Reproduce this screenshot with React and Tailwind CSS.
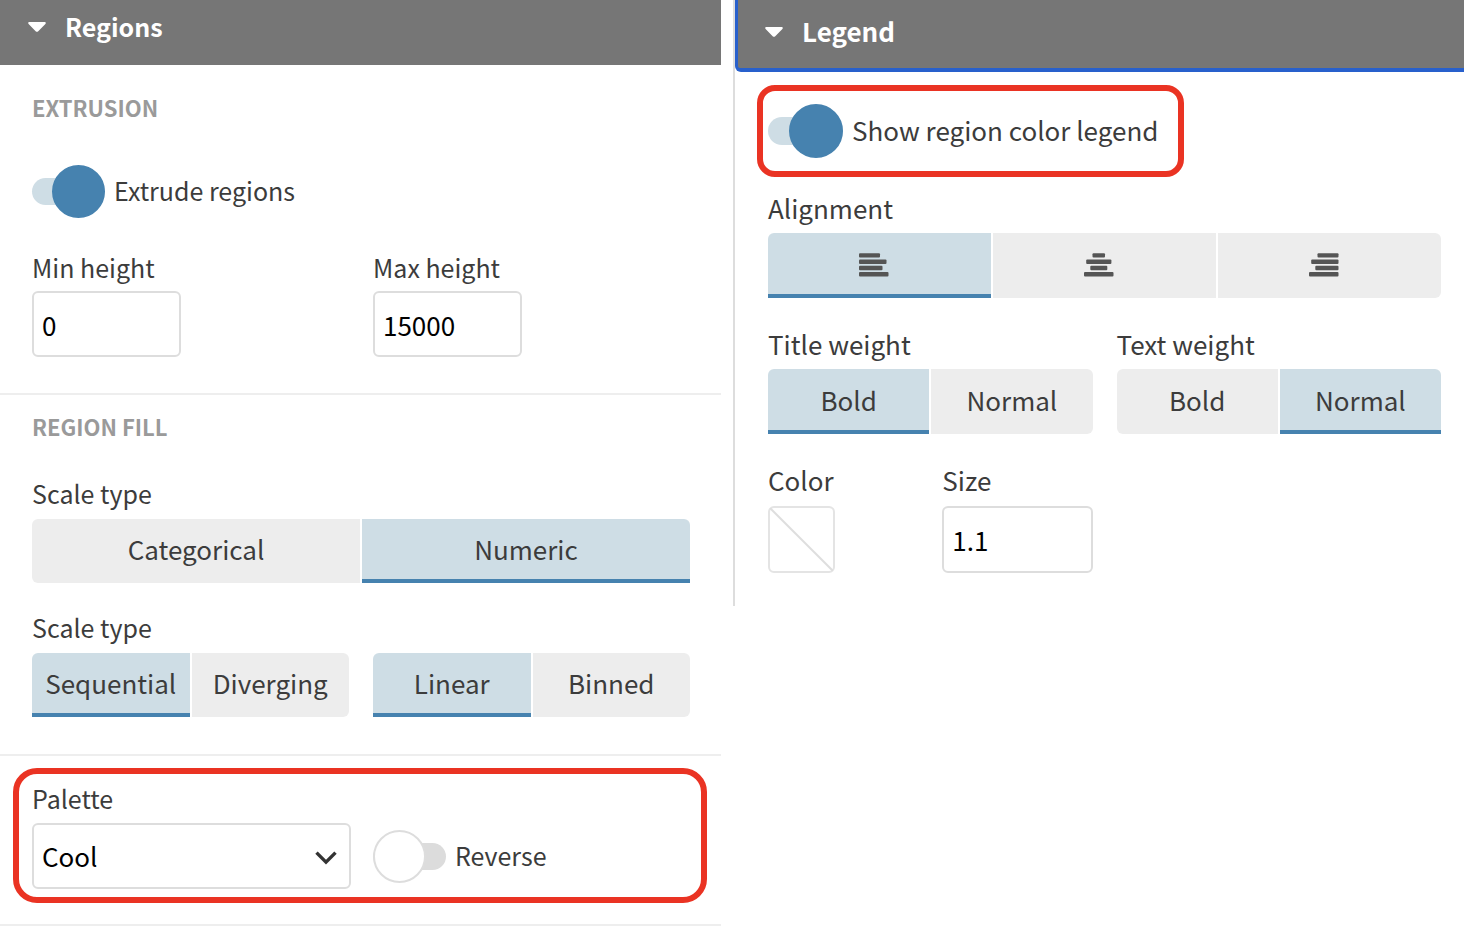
import { useId, useState } from "react";

const ICON_ROWS = {
  left: [[0, 21], [0, 27.5], [0, 23.5], [0, 29.5]],
  center: [[8.5, 12.5], [2.2, 25.2], [6.3, 17], [0, 29.5]],
  right: [[8.5, 21], [2.2, 27.3], [6.3, 23.2], [0, 29.5]],
};

function AlignIcon({ kind }) {
  return (
    <svg className="mt-0.5 mr-[11px] h-6 w-[30px]" viewBox="0 0 30 24" aria-hidden="true">
      {ICON_ROWS[kind].map(([x, width], i) => (
        <rect key={i} x={x} y={i * 6.3 + 0.2} width={width} height="4.4" rx="1" fill="#555555" />
      ))}
    </svg>
  );
}

function Caret() {
  return (
    <svg className="mt-0.5 h-[10px] w-[18px]" viewBox="0 0 18 10" aria-hidden="true">
      <path
        d="M1.4 0h15.2c1.1 0 1.6 1.2.8 2L10 9.4c-.6.6-1.5.6-2.1 0L.6 2C-.2 1.2.3 0 1.4 0Z"
        fill="#ffffff"
      />
    </svg>
  );
}

function Segmented({ label, options, initial, height = "h-16" }) {
  const [value, setValue] = useState(initial);
  return (
    <div role="group" aria-label={label} className="flex gap-0.5 overflow-hidden rounded-t-md">
      {options.map((option) => {
        const active = option.value === value;
        return (
          <button
            key={option.value}
            type="button"
            aria-pressed={active}
            aria-label={option.icon ? option.value : undefined}
            onClick={() => setValue(option.value)}
            className={
              "flex min-w-0 flex-1 items-center justify-center border-b-4 text-[26px] " +
              height +
              (active
                ? " border-[#4682af] bg-[#cedde5]"
                : " border-transparent bg-[#ededed] first:rounded-bl-md last:rounded-br-md")
            }
          >
            {option.icon ? <AlignIcon kind={option.icon} /> : option.value}
          </button>
        );
      })}
    </div>
  );
}

function Field({ label, gap = "gap-2.5", children }) {
  return (
    <div className={"flex min-w-0 flex-col " + gap}>
      <span>{label}</span>
      {children}
    </div>
  );
}

function TextField({ label, initial, gap = "gap-2", size = "h-[66px] w-[149px]" }) {
  const id = useId();
  return (
    <div className={"flex min-w-0 flex-col items-start " + gap}>
      <label htmlFor={id}>{label}</label>
      <input
        id={id}
        type="text"
        defaultValue={initial}
        className={
          "rounded-md border-2 border-[#dddddd] bg-white px-2 text-[26px] text-black " + size
        }
      />
    </div>
  );
}

function Toggle({ label, initial, size = "h-[53px] w-[73px]" }) {
  const [on, setOn] = useState(initial);
  return (
    <label className="flex items-center gap-[9px]">
      <input
        type="checkbox"
        checked={on}
        onChange={() => setOn(!on)}
        className={
          "relative shrink-0 appearance-none before:absolute before:inset-x-0 before:inset-y-[13px] before:rounded-full before:bg-[#dcdcdc] before:content-[''] after:absolute after:inset-y-0 after:left-0 after:aspect-square after:rounded-full after:border-2 after:border-[#dddddd] after:bg-white after:content-[''] checked:before:bg-[#cedde5] checked:after:right-0 checked:after:left-auto checked:after:border-[#4682af] checked:after:bg-[#4682af] " +
          size
        }
      />
      <span className="pb-[3px]">{label}</span>
    </label>
  );
}

function RegionsPanel() {
  return (
    <section className="text-[25px]">
      <h2>
        <button
          type="button"
          aria-expanded="true"
          className="flex w-full items-center gap-[19px] bg-[#767676] pt-[10px] pb-[23px] pl-7 font-bold text-white"
        >
          <Caret />
          Regions
        </button>
      </h2>

      <div className="border-b-2 border-[#eeeeee] pt-[26px] pr-[31px] pb-9 pl-8">
        <h3 className="text-[22px] leading-8 font-bold text-[#9a9a9a]">EXTRUSION</h3>
        <div className="mt-[42px] mb-[33px]">
          <Toggle label="Extrude regions" initial={true} />
        </div>
        <div className="grid grid-cols-2 gap-6">
          <TextField label="Min height" initial="0" />
          <TextField label="Max height" initial="15000" />
        </div>
      </div>

      <div className="border-b-2 border-[#eeeeee] pt-[15px] pr-[31px] pb-[37px] pl-8">
        <h3 className="mb-[35px] text-[22px] leading-8 font-bold text-[#9a9a9a]">REGION FILL</h3>
        <Field label="Scale type">
          <Segmented
            label="Scale type"
            initial="Numeric"
            options={[{ value: "Categorical" }, { value: "Numeric" }]}
          />
        </Field>
        <div className="mt-7 grid grid-cols-2 items-end gap-6">
          <Field label="Scale type">
            <Segmented
              label="Scale type"
              initial="Sequential"
              options={[{ value: "Sequential" }, { value: "Diverging" }]}
            />
          </Field>
          <Segmented
            label="Scale steps"
            initial="Linear"
            options={[{ value: "Linear" }, { value: "Binned" }]}
          />
        </div>
      </div>

      <div className="border-b-2 border-[#eeeeee] pt-3 pr-[14px] pb-[21px] pl-[13px]">
        <div className="grid grid-cols-2 items-end gap-[22px] rounded-3xl border-6 border-[#ea3323] pt-2 pr-[9px] pb-2 pl-[13px]">
          <div className="flex flex-col gap-[9px]">
            <label htmlFor="palette">Palette</label>
            <div className="grid items-center">
              <select
                id="palette"
                defaultValue="Cool"
                className="col-start-1 row-start-1 h-[66px] w-full appearance-none rounded-md border-2 border-[#dddddd] bg-white px-2 text-[26px] text-black"
              >
                <option>Cool</option>
                <option>Warm</option>
              </select>
              <svg
                className="pointer-events-none col-start-1 row-start-1 mt-[3px] mr-[14px] h-[14px] w-[22px] justify-self-end"
                viewBox="0 0 22 14"
                aria-hidden="true"
              >
                <path d="M1.5 1.6 11 11.2l9.5-9.6" fill="none" stroke="#333333" strokeWidth="3.4" />
              </svg>
            </div>
          </div>
          <div className="pb-1.5">
            <Toggle label="Reverse" initial={false} />
          </div>
        </div>
      </div>
    </section>
  );
}

function LegendPanel() {
  return (
    <section className="self-start border-l-2 border-[#dddddd] text-[26px]">
      <h2>
        <button
          type="button"
          aria-expanded="true"
          className="flex w-full items-center gap-[19px] rounded-bl-md border-b-4 border-l-3 border-[#2860cc] bg-[#767676] pt-[15px] pb-[21px] pl-[27px] font-bold text-white"
        >
          <Caret />
          Legend
        </button>
      </h2>

      <div className="pt-[13px] pr-[23px] pb-[33px] pl-[22px]">
        <div className="w-fit rounded-[18px] border-6 border-[#ea3323] py-[13px] pr-5 pl-[5px]">
          <Toggle label="Show region color legend" initial={true} size="h-[54px] w-[75px]" />
        </div>
        <div className="mt-[15px] ml-[11px] flex flex-col gap-[30px]">
          <Field label="Alignment" gap="gap-[9px]">
            <Segmented
              label="Alignment"
              initial="Left"
              height="h-[65px]"
              options={[
                { value: "Left", icon: "left" },
                { value: "Center", icon: "center" },
                { value: "Right", icon: "right" },
              ]}
            />
          </Field>
          <div className="grid grid-cols-2 gap-6">
            <Field label="Title weight" gap="gap-[9px]">
              <Segmented
                label="Title weight"
                initial="Bold"
                height="h-[65px]"
                options={[{ value: "Bold" }, { value: "Normal" }]}
              />
            </Field>
            <Field label="Text weight" gap="gap-[9px]">
              <Segmented
                label="Text weight"
                initial="Normal"
                height="h-[65px]"
                options={[{ value: "Bold" }, { value: "Normal" }]}
              />
            </Field>
          </div>
          <div className="grid grid-cols-4 gap-6">
            <Field label="Color">
              <button
                type="button"
                aria-label="Color"
                className="size-[67px] rounded-md border-2 border-[#e4e4e4] bg-white"
              >
                <svg className="size-full" viewBox="0 0 63 63" aria-hidden="true">
                  <path d="M0 0 63 63" stroke="#dedede" strokeWidth="2" />
                </svg>
              </button>
            </Field>
            <TextField label="Size" initial="1.1" gap="gap-2.5" size="h-[67px] w-[151px]" />
          </div>
        </div>
      </div>
    </section>
  );
}

export default function App() {
  return (
    <main className="grid grid-cols-[721fr_731fr] gap-3 bg-white font-['Noto_Sans_CJK_SC',sans-serif] leading-8 text-[#3c3c3c]">
      <RegionsPanel />
      <LegendPanel />
    </main>
  );
}
